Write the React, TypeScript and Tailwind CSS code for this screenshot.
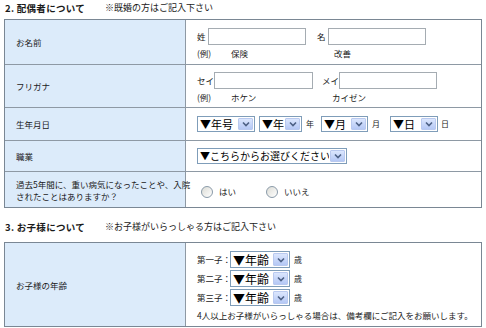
import { ReactNode } from 'react';

const font = { fontFamily: '"Noto Sans CJK JP", "Liberation Sans", sans-serif' };

function Chevron() {
  return (
    <svg width="8" height="6" viewBox="0 0 8 6">
      <path d="M1 1.5 L4 4.5 L7 1.5" fill="none" stroke="#4d6185" strokeWidth="1.6" />
    </svg>
  );
}

function Select({ label, w, size = 'text-[11px]', big = false }: { label: string; w: string; size?: string; big?: boolean }) {
  return (
    <div
      className={`flex items-stretch border border-[#7f9db9] bg-white shrink-0 ${w} ${big ? 'h-[17px]' : 'h-[16px]'}`}
    >
      <span className={`flex-1 flex items-center pl-[2px] whitespace-nowrap overflow-hidden text-black ${size} leading-none`}>
        {label}
      </span>
      <span className="w-[15px] m-px flex items-center justify-center rounded-[1px] border border-[#b9c9ef] bg-gradient-to-b from-[#dbe6fd] to-[#b5c8f5]">
        <Chevron />
      </span>
    </div>
  );
}

function TextBox({ w }: { w: string }) {
  return <div className={`h-[17px] shrink-0 border border-[#a5acb2] bg-white ${w}`} />;
}

function Radio({ label }: { label: string }) {
  return (
    <div className="flex items-center gap-[6px] whitespace-nowrap">
      <span className="w-[12px] h-[12px] rounded-full border border-[#8a9aa9] bg-gradient-to-br from-[#dcdcd6] to-white" />
      <span>{label}</span>
    </div>
  );
}

function Row({ label, h, children, last = false }: { label: ReactNode; h: string; children: ReactNode; last?: boolean }) {
  return (
    <div className={`flex ${h} ${last ? '' : 'border-b border-[#8e99a4]'}`}>
      <div className="w-[181px] shrink-0 bg-[#dcebfa] border-r border-[#8e99a4] pl-[11px] flex items-center leading-[12px] whitespace-nowrap">
        {label}
      </div>
      <div className="flex-1 pl-[11px] flex items-center whitespace-nowrap">{children}</div>
    </div>
  );
}

function Heading({ num, title, note }: { num: string; title: string; note: string }) {
  return (
    <div className="flex items-center h-[14px] pl-[5px]">
      <span className="font-bold text-[9.5px] w-[100px] whitespace-nowrap tracking-[0.3px]">
        {num}&nbsp;{title}
      </span>
      <span className="whitespace-nowrap text-[9px]">{note}</span>
    </div>
  );
}

export default function App() {
  return (
    <div className="w-[486px] h-[328px] bg-white text-[8.5px] text-[#1a1a1a] overflow-hidden" style={font}>
      <div className="pt-[1px]">
        <Heading num="2." title="配偶者について" note="※既婚の方はご記入下さい" />
      </div>

      <div className="ml-[4px] mt-[4px] w-[478px] border border-[#7a8794]">
        <Row label="お名前" h="h-[45px]">
          <div className="flex flex-col gap-[2px] pt-[3px]">
            <div className="flex items-center">
              <span className="w-[11px]">姓</span>
              <TextBox w="w-[98px]" />
              <span className="ml-[11px] w-[11px]">名</span>
              <TextBox w="w-[98px]" />
            </div>
            <div className="flex">
              <span className="w-[34px]">(例)</span>
              <span className="w-[103px]">保険</span>
              <span>改善</span>
            </div>
          </div>
        </Row>
        <Row label="フリガナ" h="h-[43px]">
          <div className="flex flex-col gap-[2px] pt-[3px]">
            <div className="flex items-center">
              <span className="w-[17px]">セイ</span>
              <TextBox w="w-[99px]" />
              <span className="ml-[9px] w-[17px]">メイ</span>
              <TextBox w="w-[98px]" />
            </div>
            <div className="flex">
              <span className="w-[34px]">(例)</span>
              <span className="w-[101px]">ホケン</span>
              <span>カイゼン</span>
            </div>
          </div>
        </Row>
        <Row label="生年月日" h="h-[33px]">
          <div className="flex items-center">
            <Select label="▼年号" w="w-[58px]" />
            <span className="ml-[4px]" />
            <Select label="▼年" w="w-[43px]" />
            <span className="ml-[4px] mr-[7px] text-[8px]">年</span>
            <Select label="▼月" w="w-[47px]" />
            <span className="ml-[4px] mr-[10px] text-[8px]">月</span>
            <Select label="▼日" w="w-[48px]" />
            <span className="ml-[3px] text-[8px]">日</span>
          </div>
        </Row>
        <Row label="職業" h="h-[31px]">
          <Select label="▼こちらからお選びください" w="w-[150px]" size="text-[10px]" />
        </Row>
        <Row
          label={
            <span>
              過去5年間に、重い病気になったことや、入院
              <br />
              されたことはありますか？
            </span>
          }
          h="h-[35px]"
          last
        >
          <div className="flex items-center pl-[4px] pt-[4px]">
            <div className="w-[65px]">
              <Radio label="はい" />
            </div>
            <Radio label="いいえ" />
          </div>
        </Row>
      </div>

      <div className="mt-[12px]">
        <Heading num="3." title="お子様について" note="※お子様がいらっしゃる方はご記入下さい" />
      </div>

      <div className="ml-[4px] mt-[8px] w-[478px] border border-[#7a8794]">
        <Row label="お子様の年齢" h="h-[83px]" last>
          <div className="flex flex-col pt-[3px]">
            {['第一子：', '第二子：', '第三子：'].map((c) => (
              <div key={c} className="flex items-center h-[19px]">
                <span className="w-[33px] whitespace-nowrap">{c}</span>
                <Select label="▼年齢" w="w-[60px]" size="text-[12px]" big />
                <span className="ml-[4px] text-[8px]">歳</span>
              </div>
            ))}
            <div className="mt-[2px] whitespace-nowrap">
              4人以上お子様がいらっしゃる場合は、備考欄にご記入をお願いします。
            </div>
          </div>
        </Row>
      </div>
    </div>
  );
}
